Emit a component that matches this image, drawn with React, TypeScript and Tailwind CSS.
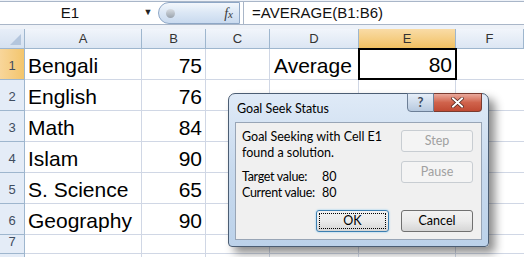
import React from "react";

const cols = ["A", "B", "C", "D", "E", "F"];
const data: [string, string][] = [
  ["Bengali", "75"],
  ["English", "76"],
  ["Math", "84"],
  ["Islam", "90"],
  ["S. Science", "65"],
  ["Geography", "90"],
];

const cellFont = { fontFamily: '"Liberation Sans", Arial, sans-serif' };
const uiFont = { fontFamily: 'Lato, "Noto Sans", sans-serif' };

function DisabledBtn({ label }: { label: string }) {
  return (
    <div className="w-[72px] h-[22px] rounded-[3px] border border-[#c8cdd2] bg-[#f4f4f4] flex items-center justify-center text-[12.5px] text-[#a0a0a0]">
      {label}
    </div>
  );
}

export default function App() {
  return (
    <div className="relative w-[524px] h-[257px] overflow-hidden bg-white" style={cellFont}>
      {/* Formula bar */}
      <div className="h-[29px] bg-[#eef2f8] pt-[1px]">
        <div className="h-[24px] bg-white border-y border-[#a9b6c8] flex items-center">
          <div className="w-[140px] h-full flex items-center justify-center text-[15px] text-[#111]">E1</div>
          <div className="w-[16px] flex items-center justify-center text-[9px] text-[#222]">▼</div>
          <div className="ml-[2px] w-[82px] h-[22px] rounded-l-[11px] border border-[#8ea7c6] bg-gradient-to-b from-[#f3f7fc] via-[#dbe7f5] to-[#c9daef] flex items-center justify-between pl-[7px] pr-[6px]">
            <div className="w-[9px] h-[9px] rounded-full bg-gradient-to-b from-[#d8dde3] to-[#9aa3ad]" />
            <span className="text-[14px] italic text-[#3a3a3a]" style={{ fontFamily: '"Liberation Serif", serif' }}>
              f<span className="text-[11px]">x</span>
            </span>
          </div>
          <div className="ml-[3px] h-full border-l border-[#a9b6c8] pl-[8px] flex items-center text-[15px] text-[#111]">
            =AVERAGE(B1:B6)
          </div>
        </div>
      </div>

      {/* Grid */}
      <div className="grid grid-cols-[25px_117px_64px_64px_89px_97px_1fr] grid-rows-[20px_31px_31px_31px_31px_31px_31px_19px_19px]">
        <div className="border-r border-b border-[#9eb6ce] bg-gradient-to-b from-[#e7eef8] to-[#d5e1f0] relative">
          <div
            className="absolute right-[3px] bottom-[3px] w-0 h-0 border-l-[11px] border-l-transparent border-b-[11px] border-b-[#b4c6dd]"
          />
        </div>
        {cols.map((c) => (
          <div
            key={c}
            className={
              "border-r border-b border-[#9eb6ce] flex items-center justify-center text-[13px] " +
              (c === "E"
                ? "bg-gradient-to-b from-[#f9dca6] to-[#f1c060] text-[#333]"
                : "bg-gradient-to-b from-[#f1f5fb] to-[#dce6f3] text-[#333]")
            }
          >
            {c}
          </div>
        ))}
        {data.map(([name, val], i) => (
          <React.Fragment key={name}>
            <div
              className={
                "border-r border-b border-[#9eb6ce] flex items-end justify-center pb-[4px] text-[13px] text-[#3f4d60] " +
                (i === 0 ? "bg-gradient-to-r from-[#f8d69a] to-[#f3c56c]" : "bg-[#e4ecf7]")
              }
            >
              {i + 1}
            </div>
            <div className="border-r border-b border-[#d0d7e5] flex items-end pl-[3px] pb-[1px] text-[21px] leading-[24px] text-black">
              {name}
            </div>
            <div className="border-r border-b border-[#d0d7e5] flex items-end justify-end pr-[3px] pb-[1px] text-[21px] leading-[24px] text-black">
              {val}
            </div>
            <div className="border-r border-b border-[#d0d7e5]" />
            <div className="border-r border-b border-[#d0d7e5] flex items-end pl-[4px] pb-[1px] text-[21px] leading-[24px] text-black">
              {i === 0 ? "Average" : ""}
            </div>
            {i === 0 ? (
              <div className="relative border-r border-b border-[#d0d7e5]">
                <div className="absolute -left-[1px] -top-[1px] w-[99px] h-[32px] border-2 border-black flex items-end justify-end pr-[3px] pb-[1px] text-[21px] leading-[24px] text-black">
                  80
                </div>
              </div>
            ) : (
              <div className="border-r border-b border-[#d0d7e5]" />
            )}
            <div className="border-b border-[#d0d7e5]" />
          </React.Fragment>
        ))}
        {[7, 8].map((r) => (
          <React.Fragment key={r}>
            <div className="border-r border-b border-[#9eb6ce] bg-[#e4ecf7] flex items-end justify-center pb-[2px] text-[13px] text-[#3f4d60]">
              {r === 7 ? "7" : ""}
            </div>
            <div className="border-r border-b border-[#d0d7e5]" />
            <div className="border-r border-b border-[#d0d7e5]" />
            <div className="border-r border-b border-[#d0d7e5]" />
            <div className="border-r border-b border-[#d0d7e5]" />
            <div className="border-r border-b border-[#d0d7e5]" />
            <div className="border-b border-[#d0d7e5]" />
          </React.Fragment>
        ))}
      </div>

      {/* Dialog */}
      <div
        className="absolute left-[228px] top-[93px] w-[261px] h-[154px] rounded-t-[7px] rounded-b-[4px] border border-[#4b5d73] bg-gradient-to-b from-[#dfeaf7] via-[#c8daee] to-[#bcd2ea] shadow-[6px_6px_10px_rgba(0,0,0,0.45)] flex flex-col px-[6px] pb-[6px]"
        style={uiFont}
      >
        <div className="h-[28px] flex items-start">
          <div className="pt-[6px] pl-[2px] text-[12.5px] text-black flex-1">Goal Seek Status</div>
          <div className="flex -mt-[1px] mr-[0px]">
            <div className="w-[27px] h-[19px] rounded-bl-[4px] border border-[#6d7f97] bg-gradient-to-b from-[#e6eef8] to-[#b7c9df] flex items-center justify-center text-[13px] font-bold text-[#3d4b5c]">
              ?
            </div>
            <div className="w-[48px] h-[19px] rounded-br-[4px] border border-l-0 border-[#7a3b30] bg-gradient-to-b from-[#e9a99c] via-[#d0634c] to-[#c04a33] flex items-center justify-center">
              <svg width="13" height="11" viewBox="0 0 13 11">
                <path d="M2 1.5 L11 9.5 M11 1.5 L2 9.5" stroke="#4a2018" strokeWidth="3.4" strokeLinecap="square" />
                <path d="M2 1.5 L11 9.5 M11 1.5 L2 9.5" stroke="#ffffff" strokeWidth="2" strokeLinecap="square" />
              </svg>
            </div>
          </div>
        </div>
        <div className="flex-1 border border-[#98a5b6] bg-[#f0f0f0] flex flex-col pr-[8px] pb-[7px]">
          <div className="h-[87px] flex">
            <div className="flex-1 pl-[6px] pt-[6px] text-[12.5px] leading-[16px] text-black whitespace-nowrap">
              <div>Goal Seeking with Cell E1</div>
              <div>found a solution.</div>
              <div className="mt-[8px] grid grid-cols-[80px_1fr]">
                <div className="tracking-[-0.3px]">Target value:</div>
                <div>80</div>
                <div className="tracking-[-0.3px]">Current value:</div>
                <div>80</div>
              </div>
            </div>
            <div className="pt-[7px] flex flex-col gap-[9px]">
              <DisabledBtn label="Step" />
              <DisabledBtn label="Pause" />
            </div>
          </div>
          <div className="flex justify-end gap-[12px]">
            <div className="w-[73px] h-[22px] rounded-[3px] border border-[#3c7fb1] shadow-[0_0_2px_#7ec4f0] bg-gradient-to-b from-[#f2f2f2] via-[#ebebeb] to-[#d6d6d6] p-[2px]">
              <div className="w-full h-full border border-dotted border-black flex items-center justify-center text-[12.5px] text-black">
                OK
              </div>
            </div>
            <div className="w-[72px] h-[22px] rounded-[3px] border border-[#707070] bg-gradient-to-b from-[#f2f2f2] via-[#ebebeb] to-[#d6d6d6] flex items-center justify-center text-[12.5px] text-black">
              Cancel
            </div>
          </div>
        </div>
      </div>
    </div>
  );
}
